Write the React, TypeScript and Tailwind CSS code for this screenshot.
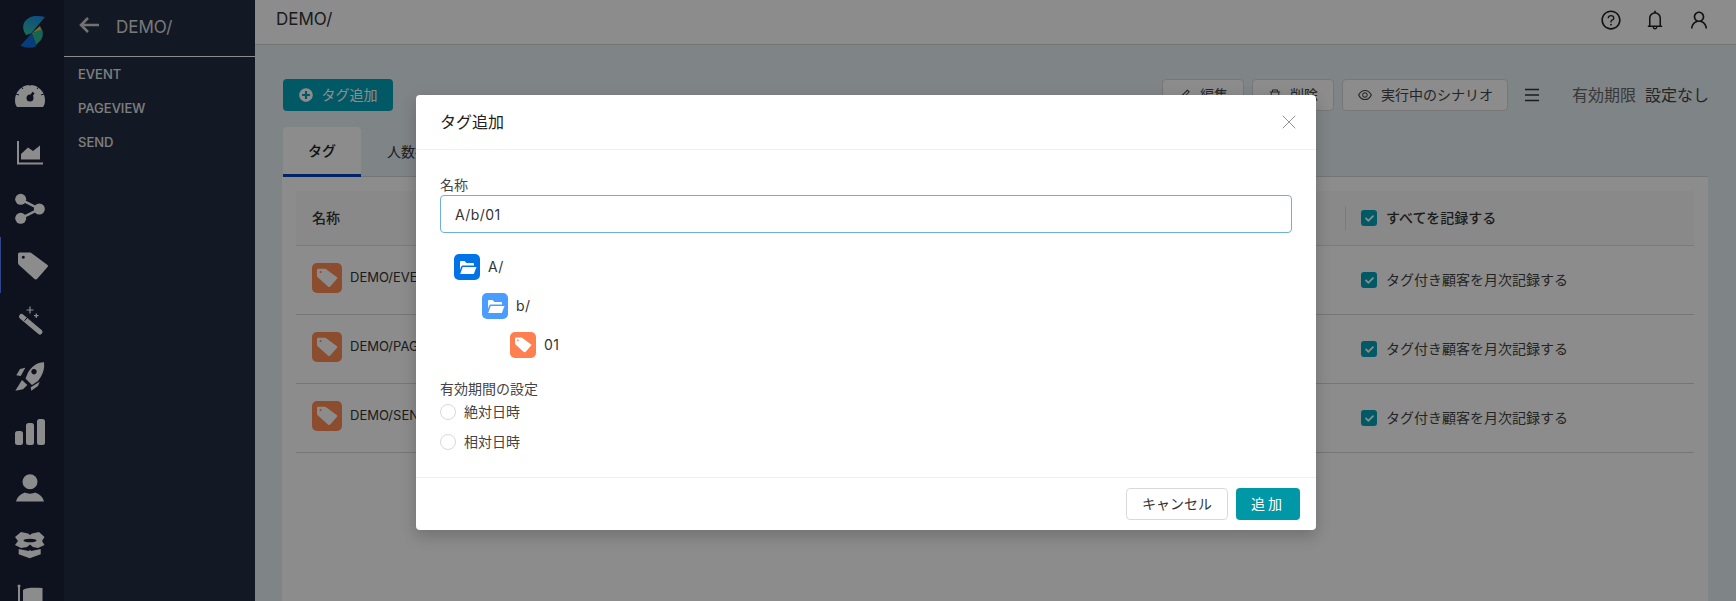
import React from 'react';
import { FaCheck, FaPlusCircle } from 'react-icons/fa';
import {
  AiOutlineBell,
  AiOutlineDelete,
  AiOutlineEdit,
  AiOutlineEye,
  AiOutlineMenu,
  AiOutlineQuestionCircle,
  AiOutlineUser,
} from 'react-icons/ai';
import { X } from 'lucide-react';

const fontStack = { fontFamily: 'Inter, "Noto Sans CJK JP", sans-serif' };
const RAIL = '#182137';

// tag outline with its punched hole, in the rail's page coordinates
const TAG_PATH =
  'M19.500 252.500 H30 Q31 252.500 32 253.500 L47.500 265 Q48.500 266 47.500 267 L37.500 278.500 Q36 280 34.500 279 L19 265 Q18 264 18 263 V254 Q18 252.500 19.500 252.500 Z M23.300 255.800 A1.500 1.500 0 1 0 23.301 255.800 Z';

function Logo() {
  return (
    <svg width="64" height="64" viewBox="0 0 64 64" className="shrink-0">
      <defs>
        <linearGradient id="logoTop" x1="0.800" y1="0" x2="0.200" y2="1">
          <stop offset="0" stopColor="#1a8cf0" />
          <stop offset="1" stopColor="#2ec4a8" />
        </linearGradient>
      </defs>
      <path d="M45 17 C38 15 28 15 24 23 C22 28 24 32 26 35 L31 33.500 Z" fill="url(#logoTop)" />
      <path d="M31.700 33.300 L40 26 L41.700 30 Z" fill="#f0c050" />
      <path d="M31.700 33.300 L42 29 C43.500 33 43 37 41 40 L36 45 Z" fill="#2cb894" />
      <path d="M31.700 33.300 L36 45 L36 46.500 C31 48.500 25 48 20.500 45.500 Z" fill="#1070e0" />
    </svg>
  );
}

// each rail icon is drawn in page coordinates, row is the slot index
function RailIcon({ row, active, children }: { row: number; active?: boolean; children: React.ReactNode }) {
  return (
    <div className={'h-[56px] shrink-0 flex justify-center border-l ' + (active ? 'border-[#5e7cff]' : 'border-transparent')}>
      <svg width="41" height="56" viewBox={`12 ${69 + 56 * row} 41 56`} fill="white">
        {children}
      </svg>
    </div>
  );
}

function TagGlyph({ w, h }: { w: number; h: number }) {
  return (
    <svg width={w} height={h} viewBox="18 252 31 28" fill="white">
      <path d={TAG_PATH} fillRule="evenodd" />
    </svg>
  );
}

function FolderGlyph() {
  return (
    <svg width="26" height="26" viewBox="0 0 26 26" fill="white">
      <path d="M6 8 Q6 7 7 7 H10.500 L12.500 9 H19 Q20 9 20 10 V11.500 H8.500 Q7.500 11.500 7 13 L6 16 Z" />
      <path d="M6.200 20 L8.700 13 H22.500 L19.800 20 Z" />
    </svg>
  );
}

function Check() {
  return (
    <div className="w-4 h-4 rounded-[3px] bg-[#00a3b8] flex items-center justify-center shrink-0">
      <FaCheck size={9} color="white" />
    </div>
  );
}

function TableRow({ name }: { name: string }) {
  return (
    <div className="h-[69px] flex items-center border-b border-[#d8d8d8]">
      <div className="w-[1065px] pl-4 -mt-[5px] flex items-center gap-2 text-[13px] text-[#333]">
        <div className="w-[30px] h-[30px] bg-[#ff8c55] rounded-[5px] flex items-center justify-center shrink-0">
          <TagGlyph w={21} h={20} />
        </div>
        {name}
      </div>
      <Check />
      <span className="ml-[9px] text-sm text-[#444]">タグ付き顧客を月次記録する</span>
    </div>
  );
}

function OutlineButton({ icon, label, width }: { icon: React.ReactNode; label: string; width: string }) {
  return (
    <button className={`${width} h-8 shrink-0 bg-white border border-[#d9d9d9] rounded text-sm text-[#444] flex items-center justify-center gap-2`}>
      {icon}
      {label}
    </button>
  );
}

function TreeRow({ indent, color, label, children }: { indent: string; color: string; label: string; children: React.ReactNode }) {
  return (
    <div className={`${indent} h-[39px] flex items-center gap-2 text-sm text-[#333] tracking-[0.4px]`}>
      <div className={`w-[26px] h-[26px] ${color} rounded-[5px] flex items-center justify-center`}>{children}</div>
      {label}
    </div>
  );
}

function Radio({ label }: { label: string }) {
  return (
    <div className="h-[30px] flex items-center gap-2 text-sm text-[#444]">
      <div className="w-4 h-4 rounded-full border border-[#d9d9d9] bg-white" />
      {label}
    </div>
  );
}

export default function App() {
  return (
    <div className="relative h-[601px] w-[1736px] overflow-hidden flex bg-[#e7f0f6]" style={fontStack}>
      {/* icon rail */}
      <div className="w-16 shrink-0 bg-[#182137] flex flex-col overflow-hidden">
        <Logo />
        <div className="h-[5px] shrink-0" />
        <RailIcon row={0}>
          <g transform="translate(15 83)">
            <path d="M0 17 A15 15 0 0 1 30 17 C30 20 29.500 22 28 24 H2 C0.500 22 0 20 0 17 Z" />
            <path d="M15 0 V3 M6 3.500 L8 6 M24 3.500 L22 6 M1 11 L4 12 M29 11 L26 12" stroke={RAIL} strokeWidth="1" />
            <circle cx="15" cy="15" r="3.500" fill={RAIL} />
            <path d="M15 15 L18.500 9.500" stroke={RAIL} strokeWidth="2.500" />
          </g>
        </RailIcon>
        <RailIcon row={1}>
          <g transform="translate(17 141)">
            <path d="M1 0 V22.500 H26" fill="none" stroke="white" strokeWidth="2" />
            <path d="M4 18.600 V13 L11 6.500 L16 10 L23 4.500 V18.600 Z" />
          </g>
        </RailIcon>
        <RailIcon row={2}>
          <path d="M20.700 199.300 L39.300 209 L20.700 218.300" fill="none" stroke="white" strokeWidth="2.500" />
          <circle cx="20.700" cy="199.300" r="5.500" />
          <circle cx="39.300" cy="209" r="5.500" />
          <circle cx="20.700" cy="218.300" r="5.500" />
        </RailIcon>
        <RailIcon row={3} active>
          <path d={TAG_PATH} fillRule="evenodd" />
        </RailIcon>
        <RailIcon row={4}>
          <path d="M21.500 316.500 L40 332" stroke="white" strokeWidth="5" strokeLinecap="round" />
          <path d="M24.500 320.800 L27.500 317.300" stroke={RAIL} strokeWidth="1" />
          <path d="M30 306.500 V313.500 M26.500 310 H33.500 M36.300 313.500 V318 M34 315.700 H38.500" stroke="white" strokeWidth="1.200" />
        </RailIcon>
        <RailIcon row={5}>
          <path
            fillRule="evenodd"
            d="M44 362.300 C38 362 32 366 28 372.500 L25.500 378.500 L32 385 L38 381 C42 376 45 370 44 362.300 Z M34 369 A2.700 2.700 0 1 0 34.001 369 Z"
          />
          <path d="M20 369 L25.300 367.700 L20.700 376 L16.300 375.300 Z" />
          <path d="M39.700 381.700 L38 386 L31.300 390.700 L30.700 387.300 Z" />
          <path d="M22 380 L27.300 385 L23 389.300 L15.300 390.700 Z" />
        </RailIcon>
        <RailIcon row={6}>
          <rect x="15" y="431" width="8" height="14" rx="2.500" />
          <rect x="26" y="423" width="8" height="22" rx="2.500" />
          <rect x="37" y="419" width="8" height="26" rx="2.500" />
        </RailIcon>
        <RailIcon row={7}>
          <circle cx="30" cy="481.700" r="7.500" />
          <path d="M16 501.500 C17 497 20 494 25 492.500 C27 494 33 494 35 492.500 C40 494 43 497 44 501.500 Z" />
        </RailIcon>
        <RailIcon row={8}>
          <path d="M21 532 L28 533.500 L30 535 L32 533.500 L39 532 L44.500 537 L42 541 L44.500 545 L38 548 L33 547 L30 544.500 L27 547 L21 548 L15 545 L18 541 L15 537 Z" />
          <ellipse cx="30" cy="540.500" rx="6.500" ry="1.800" fill={RAIL} />
          <path d="M18.700 549 L28.700 551 L30 550 L31.300 551 L40.700 549 V554.300 L29.700 558.300 L18.700 554.300 Z" />
        </RailIcon>
        <RailIcon row={9}>
          <rect x="18" y="586" width="2" height="20" />
          <circle cx="19" cy="586" r="1.500" />
          <path d="M23 590 C28 587 34 588 42.500 588 V606 H23 Z" />
        </RailIcon>
      </div>

      {/* tag tree panel */}
      <div className="w-[191px] shrink-0 bg-[#242f43] text-white">
        <div className="h-[57px] border-b border-white flex items-center gap-[17px] pl-[15px]">
          <svg width="20" height="16" viewBox="0 0 20 16" fill="none" stroke="#d0d0d0" strokeWidth="2.500" className="-mt-[6px]">
            <path d="M20 8 H2 M9 1 L2 8 L9 15" />
          </svg>
          <span className="text-[17px] text-[#dddddd]">DEMO/</span>
        </div>
        <div className="pl-[14px] pt-[1px] text-[13px] font-medium text-[#e8e8e8]">
          <div className="h-[34px] flex items-center">EVENT</div>
          <div className="h-[34px] flex items-center">PAGEVIEW</div>
          <div className="h-[34px] flex items-center">SEND</div>
        </div>
      </div>

      {/* main */}
      <div className="flex-1 min-w-0 flex flex-col">
        <div className="h-[45px] shrink-0 bg-white border-b border-[#d0d0d0] flex items-center justify-between pl-[21px] pr-[26px]">
          <span className="text-[17px] text-[#333] -mt-1">DEMO/</span>
          <div className="flex items-center gap-[22px] text-[#222] -mt-1">
            <AiOutlineQuestionCircle size={22} />
            <AiOutlineBell size={22} />
            <AiOutlineUser size={22} />
          </div>
        </div>

        <div className="flex-1 pl-[28px] pr-[20px] pt-[34px]">
          <div className="flex items-center h-8 whitespace-nowrap">
            <button className="w-[110px] h-8 shrink-0 bg-[#00a3b8] rounded text-white text-sm flex items-center justify-center gap-[9px]">
              <FaPlusCircle size={14} />
              タグ追加
            </button>
            <div className="ml-[769px] flex items-center gap-2">
              <OutlineButton icon={<AiOutlineEdit size={14} />} label="編集" width="w-[82px]" />
              <OutlineButton icon={<AiOutlineDelete size={14} />} label="削除" width="w-[82px]" />
              <OutlineButton icon={<AiOutlineEye size={16} />} label="実行中のシナリオ" width="w-[166px]" />
            </div>
            <AiOutlineMenu size={18} className="ml-[15px] shrink-0 text-[#333]" />
            <span className="ml-[31px] text-base text-[#666]">有効期限</span>
            <span className="ml-[9px] text-base text-[#444]">設定なし</span>
          </div>

          <div className="mt-4 mr-[8px] h-[50px] flex border-b border-[#d0d7dc]">
            <div className="w-[78px] h-[50px] bg-white rounded-t border-b-[3px] border-[#0043b8] flex items-center justify-center text-sm font-medium text-[#222]">
              タグ
            </div>
            <div className="ml-[26px] h-[49px] flex items-center text-sm text-[#333]">人数推移</div>
          </div>

          <div className="-ml-px mr-[8px] h-[425px] bg-white px-[14px] pt-[14px]">
            <div className="h-[55px] flex items-center bg-[#fafafa] border-b border-[#e0e0e0]">
              <div className="w-[1049px] pl-4 text-sm font-medium text-[#333]">名称</div>
              <div className="w-4 h-6 border-l border-[#e0e0e0]" />
              <Check />
              <span className="ml-[9px] text-sm font-medium text-[#333]">すべてを記録する</span>
            </div>
            <TableRow name="DEMO/EVENT" />
            <TableRow name="DEMO/PAGEVIEW" />
            <TableRow name="DEMO/SEND" />
          </div>
        </div>
      </div>

      {/* modal */}
      <div className="absolute inset-0 bg-black/45 pl-[416px] pt-[95px]">
        <div className="w-[900px] h-[435px] bg-white rounded shadow-[0_6px_16px_rgba(0,0,0,0.2)] flex flex-col">
          <div className="h-[55px] shrink-0 border-b border-[#f0f0f0] flex items-center justify-between pl-6 pr-[15px]">
            <span className="text-base text-[#222]">タグ追加</span>
            <X size={24} strokeWidth={0.8} className="text-[#777]" />
          </div>
          <div className="flex-1 px-6 pt-[26px]">
            <div className="text-sm leading-[20px] text-[#444] -mt-[1px]">名称</div>
            <input
              readOnly
              value="A/b/01"
              className="block w-[852px] h-[38px] border border-[#6fb1d6] rounded px-[14px] text-sm text-[#333] tracking-[0.4px] outline-none"
            />
            <div className="mt-[14px]">
              <TreeRow indent="pl-[14px]" color="bg-[#0073e6]" label="A/">
                <FolderGlyph />
              </TreeRow>
              <TreeRow indent="pl-[42px]" color="bg-[#4a9dff]" label="b/">
                <FolderGlyph />
              </TreeRow>
              <TreeRow indent="pl-[70px]" color="bg-[#ff7f50]" label="01">
                <TagGlyph w={17} h={16} />
              </TreeRow>
            </div>
            <div className="mt-[15px] text-sm leading-[20px] text-[#444]">有効期間の設定</div>
            <div className="-mt-[2px]">
              <Radio label="絶対日時" />
              <Radio label="相対日時" />
            </div>
          </div>
          <div className="h-[53px] shrink-0 border-t border-[#f0f0f0] flex items-center justify-end gap-2 pr-4">
            <button className="w-[102px] h-8 border border-[#d9d9d9] rounded text-sm text-[#333]">キャンセル</button>
            <button className="w-16 h-8 bg-[#0097a7] rounded text-sm text-white tracking-[3px]">追加</button>
          </div>
        </div>
      </div>
    </div>
  );
}
